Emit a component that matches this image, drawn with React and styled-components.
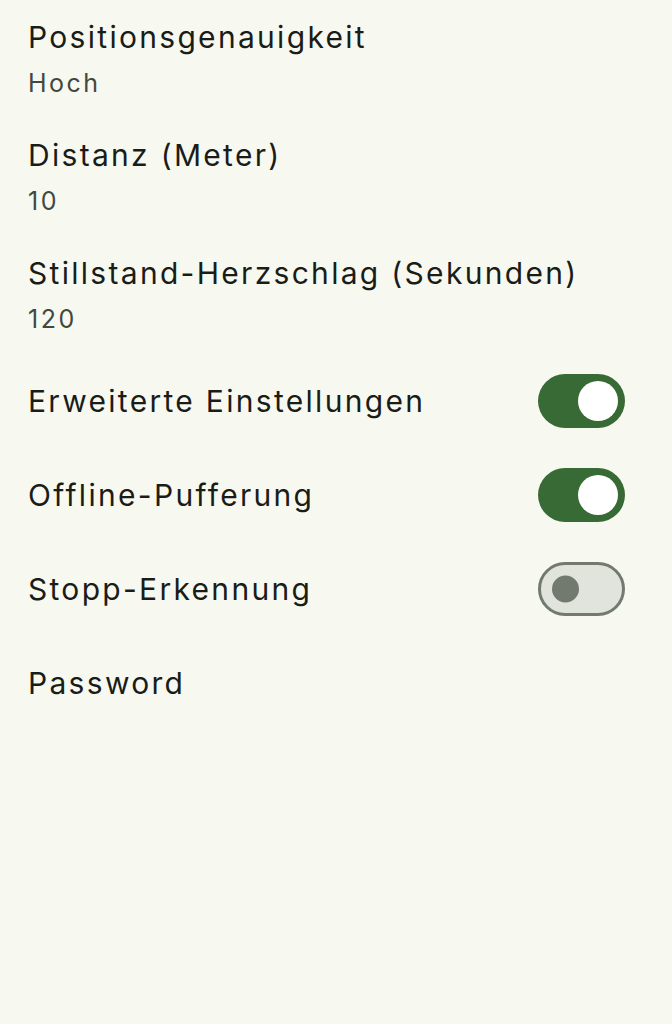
import React from "react";
import styled, { createGlobalStyle } from "styled-components";

const Global = createGlobalStyle`
  html, body { margin: 0; padding: 0; background: #f7f9f1; }
  body { font-family: Inter, "Noto Sans", sans-serif; }
`;

const Page = styled.div`
  width: 672px;
  min-height: 1024px;
  background: #f7f9f1;
  display: flex;
  flex-direction: column;
`;

const TwoLineRow = styled.div`
  height: 118px;
  box-sizing: border-box;
  padding: 17px 28px 0 28px;
  display: flex;
  flex-direction: column;
`;

const Title = styled.div`
  font-size: 30px;
  line-height: 40px;
  letter-spacing: 2.3px;
  color: #1a1c18;
  white-space: nowrap;
`;

const Subtitle = styled.div`
  margin-top: 9px;
  font-size: 25px;
  line-height: 34px;
  letter-spacing: 2.5px;
  color: #43483f;
`;

const SwitchRow = styled.div`
  height: 94px;
  box-sizing: border-box;
  padding: 0 47px 0 28px;
  display: flex;
  align-items: center;
  justify-content: space-between;
`;

const Track = styled.div`
  width: 87px;
  height: 54px;
  box-sizing: border-box;
  border-radius: 27px;
  position: relative;
  background: ${(p) => (p.$on ? "#386a35" : "#e0e4dc")};
  border: ${(p) => (p.$on ? "none" : "3px solid #72796f")};
  flex-shrink: 0;
`;

const Thumb = styled.div`
  position: absolute;
  top: 50%;
  border-radius: 50%;
  transform: translateY(-50%);
  width: ${(p) => (p.$on ? "40px" : "27px")};
  height: ${(p) => (p.$on ? "40px" : "27px")};
  background: ${(p) => (p.$on ? "#ffffff" : "#72796f")};
  ${(p) => (p.$on ? "right: 7px;" : "left: 11px;")}
`;

const Toggle = ({ on }) => (
  <Track $on={on}>
    <Thumb $on={on} />
  </Track>
);

const twoLine = [
  ["Positionsgenauigkeit", "Hoch"],
  ["Distanz (Meter)", "10"],
  ["Stillstand-Herzschlag (Sekunden)", "120"],
];

const switches = [
  ["Erweiterte Einstellungen", true],
  ["Offline-Pufferung", true],
  ["Stopp-Erkennung", false],
];

export default function App() {
  return (
    <>
      <Global />
      <Page>
        {twoLine.map(([t, s]) => (
          <TwoLineRow key={t}>
            <Title>{t}</Title>
            <Subtitle>{s}</Subtitle>
          </TwoLineRow>
        ))}
        {switches.map(([t, on]) => (
          <SwitchRow key={t}>
            <Title>{t}</Title>
            <Toggle on={on} />
          </SwitchRow>
        ))}
        <SwitchRow>
          <Title>Password</Title>
        </SwitchRow>
      </Page>
    </>
  );
}
